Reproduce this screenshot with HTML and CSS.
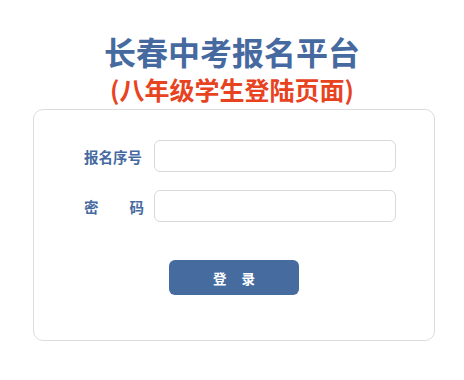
FILE: index.html
```html
<!DOCTYPE html>
<html lang="zh">
<head>
<meta charset="utf-8">
<link rel="stylesheet" href="styles.css">
</head>
<body>
<div class="page">
  <h1 class="title">长春中考报名平台</h1>
  <h2 class="subtitle">(八年级学生登陆页面)</h2>
  <form class="card">
    <div class="row">
      <label class="label">报名序号</label>
      <input class="input" type="text">
    </div>
    <div class="row">
      <label class="label label-just">密码</label>
      <input class="input" type="password">
    </div>
    <div class="actions">
      <button class="btn" type="button">登录</button>
    </div>
  </form>
</div>
</body>
</html>
```
FILE: styles.css
```css
html, body {
  margin: 0;
  padding: 0;
  background: #ffffff;
}
.page {
  width: 464px;
  font-family: "Noto Sans CJK SC", "Noto Sans", sans-serif;
  padding-top: 28px;
}
.title {
  margin: 0;
  text-align: center;
  font-size: 32px;
  line-height: 46px;
  font-weight: 700;
  color: #466a9f;
}
.subtitle {
  margin: 0;
  text-align: center;
  font-size: 25px;
  line-height: 30px;
  font-weight: 700;
  color: #e8431f;
}
.card {
  box-sizing: border-box;
  margin: 5px 0 0 33px;
  width: 402px;
  height: 232px;
  border: 1px solid #dcdcdc;
  border-radius: 10px;
  padding-top: 30px;
  display: flex;
  flex-direction: column;
  gap: 18px;
}
.row {
  display: flex;
  align-items: center;
  padding-left: 50px;
  gap: 10px;
}
.label {
  width: 60px;
  font-size: 14.5px;
  font-weight: 700;
  color: #466a9f;
  white-space: nowrap;
}
.label-just {
  text-align: justify;
  text-align-last: justify;
}
.input {
  box-sizing: border-box;
  width: 242px;
  height: 32px;
  border: 1px solid #d9d9d9;
  border-radius: 6px;
  margin: 0;
  outline: none;
}
.actions {
  display: flex;
  justify-content: center;
  margin-top: 20px;
}
.btn {
  width: 130px;
  height: 35px;
  border: none;
  border-radius: 6px;
  background: #456b9f;
  color: #ffffff;
  font-family: "Noto Sans CJK SC", sans-serif;
  font-size: 13.5px;
  font-weight: 700;
  letter-spacing: 15px;
  text-indent: 15px;
  padding: 0;
}
```
